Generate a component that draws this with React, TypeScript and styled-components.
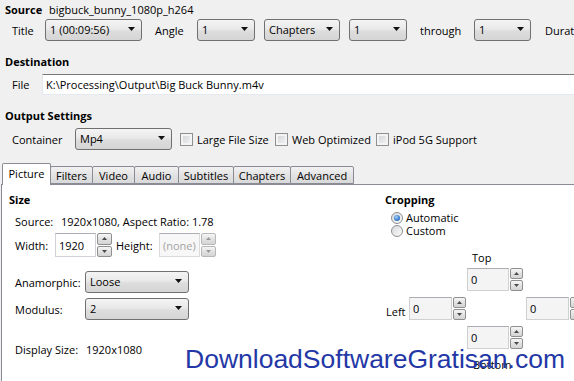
import React from "react";
import styled, { createGlobalStyle } from "styled-components";

const Global = createGlobalStyle`
  html, body { margin: 0; padding: 0; background: #f0f0f0; }
  body {
    font-family: "Open Sans", "Noto Sans", sans-serif;
    font-size: 11px;
    color: #000;
    overflow: hidden;
  }
  #root { width: 574px; height: 381px; }
`;

const Window = styled.div`
  position: relative;
  width: 574px;
  height: 381px;
  overflow: hidden;
  background: #f0f0f0;
  display: flex;
  flex-direction: column;
  white-space: nowrap;
  & > * { flex-shrink: 0; }
`;

const SourceRow = styled.div`
  display: flex;
  align-items: center;
  height: 19px;
  padding-left: 5px;
`;

const Bold = styled.span<{ $w?: number }>`
  font-weight: 700;
  ${(p) => (p.$w ? `width: ${p.$w}px; flex-shrink: 0;` : "")}
`;

const Header = styled.div<{ $mt?: number; $pl?: number }>`
  font-weight: 700;
  line-height: 16px;
  height: 16px;
  flex-shrink: 0;
  margin-top: ${(p) => p.$mt ?? 0}px;
  padding-left: ${(p) => p.$pl ?? 0}px;
`;

const FieldRow = styled.div<{ $mt?: number; $h?: number; $pl?: number }>`
  display: flex;
  align-items: center;
  height: ${(p) => p.$h ?? 22}px;
  margin-top: ${(p) => p.$mt ?? 0}px;
  padding-left: ${(p) => p.$pl ?? 12}px;
  flex-shrink: 0;
`;

const Label = styled.span<{ $w?: number; $ml?: number; $color?: string }>`
  flex-shrink: 0;
  ${(p) => (p.$w ? `width: ${p.$w}px;` : "")}
  margin-left: ${(p) => p.$ml ?? 0}px;
  color: ${(p) => p.$color ?? "#000"};
`;

const ComboBox = styled.div<{ $w: number; $ml?: number }>`
  box-sizing: border-box;
  width: ${(p) => p.$w}px;
  margin-left: ${(p) => p.$ml ?? 0}px;
  height: 22px;
  flex-shrink: 0;
  display: flex;
  align-items: center;
  padding: 0 6px 2px 4px;
  border: 1px solid #707070;
  border-radius: 3px;
  background: linear-gradient(#f4f4f4, #e9e9e9 45%, #dddddd 55%, #d5d5d5);
`;

const ComboText = styled.span`
  flex: 1;
  overflow: hidden;
`;

const TextBox = styled.div`
  box-sizing: border-box;
  flex: 1;
  height: 21px;
  margin-right: -10px;
  display: flex;
  align-items: center;
  padding-left: 3px;
  background: #fff;
  border: 1px solid #e3e9ef;
  border-top-color: #7a7a7a;
`;

const CheckItem = styled.div<{ $w?: number; $ml?: number }>`
  display: flex;
  align-items: center;
  gap: 4px;
  flex-shrink: 0;
  ${(p) => (p.$w ? `width: ${p.$w}px;` : "")}
  margin-left: ${(p) => p.$ml ?? 0}px;
`;

const CheckBox = styled.span`
  box-sizing: border-box;
  width: 13px;
  height: 13px;
  border: 1px solid #8e8f8f;
  background: linear-gradient(135deg, #cfd1d4 0%, #f6f6f6 100%);
  box-shadow: inset 0 0 0 2px #f4f4f4;
  flex-shrink: 0;
`;

const TabStrip = styled.div`
  display: flex;
  align-items: flex-end;
  height: 21px;
  margin-top: 13px;
  padding-left: 2px;
  position: relative;
  z-index: 1;
  flex-shrink: 0;
`;

const Tab = styled.div<{ $w: number; $active?: boolean }>`
  box-sizing: border-box;
  width: ${(p) => p.$w}px;
  height: ${(p) => (p.$active ? 22 : 18)}px;
  margin-left: ${(p) => (p.$active ? 0 : -1)}px;
  margin-bottom: ${(p) => (p.$active ? -1 : 0)}px;
  border: 1px solid #898c95;
  border-bottom: ${(p) => (p.$active ? "none" : "1px solid #898c95")};
  border-radius: 2px 2px 0 0;
  background: ${(p) =>
    p.$active ? "#ffffff" : "linear-gradient(#f2f2f2, #e3e3e3 50%, #d9d9d9)"};
  display: flex;
  align-items: ${(p) => (p.$active ? "flex-start" : "center")};
  padding-top: ${(p) => (p.$active ? 2 : 0)}px;
  justify-content: center;
  flex-shrink: 0;
`;

const Panel = styled.div`
  box-sizing: border-box;
  height: 220px;
  flex-shrink: 0;
  margin-left: 1px;
  margin-right: -4px;
  border: 1px solid #898c95;
  background: #ffffff;
  display: grid;
  grid-template-columns: 376px 1fr;
  padding: 7px 0 0 7px;
`;

const Column = styled.div`
  display: flex;
  flex-direction: column;
`;

const InfoRow = styled.div<{ $mt?: number }>`
  display: flex;
  line-height: 16px;
  height: 16px;
  padding-left: 6px;
  margin-top: ${(p) => p.$mt ?? 0}px;
`;

const SpinWrap = styled.div<{ $h: number }>`
  display: flex;
  height: ${(p) => p.$h}px;
  flex-shrink: 0;
`;

const SpinInput = styled.div<{ $w: number; $bg: string; $fg: string; $bd: string }>`
  box-sizing: border-box;
  width: ${(p) => p.$w}px;
  height: 100%;
  border: 1px solid ${(p) => p.$bd};
  border-top-color: #abadb3;
  background: ${(p) => p.$bg};
  color: ${(p) => p.$fg};
  padding-left: 3px;
  display: flex;
  align-items: center;
`;

const SpinButtons = styled.div<{ $w: number }>`
  box-sizing: border-box;
  width: ${(p) => p.$w}px;
  display: flex;
  flex-direction: column;
  gap: 1px;
  padding-left: 1px;
`;

const SpinBtn = styled.div<{ $dim?: boolean }>`
  flex: 1;
  box-sizing: border-box;
  border: 1px solid ${(p) => (p.$dim ? "#b8b8b8" : "#8f8f8f")};
  border-radius: 2px;
  background: linear-gradient(#f6f6f6, #e2e2e2 50%, #d4d4d4);
  display: flex;
  align-items: center;
  justify-content: center;
`;

const RadioList = styled.div`
  display: flex;
  flex-direction: column;
  margin-top: 3px;
  padding-left: 6px;
`;

const RadioRow = styled.div`
  display: flex;
  align-items: center;
  gap: 3px;
  height: 13px;
  line-height: 13px;
`;

const RadioCircle = styled.span<{ $on?: boolean }>`
  box-sizing: border-box;
  width: 12px;
  height: 12px;
  border-radius: 50%;
  border: 1px solid #8e8f8f;
  background: linear-gradient(135deg, #d9dadc, #fbfbfb);
  display: flex;
  align-items: center;
  justify-content: center;
  flex-shrink: 0;
  &::after {
    content: "";
    display: ${(p) => (p.$on ? "block" : "none")};
    width: 6px;
    height: 6px;
    border-radius: 50%;
    background: radial-gradient(circle at 40% 35%, #a9d4f7 0%, #3a7fd0 55%, #1f4f9a 100%);
  }
`;

const CropGrid = styled.div`
  display: grid;
  grid-template-columns: 23px 58px 59px 60px;
  grid-template-rows: 18px 29px 29px 23px auto;
  margin-top: 13px;
  margin-left: 1px;
`;

const CropCell = styled.div<{ $c: number; $r: number; $pl?: number; $mt?: number; $center?: boolean }>`
  grid-column: ${(p) => p.$c};
  grid-row: ${(p) => p.$r};
  padding-left: ${(p) => p.$pl ?? 0}px;
  margin-top: ${(p) => p.$mt ?? 0}px;
  line-height: 15px;
  ${(p) => (p.$center ? "align-self: center;" : "align-self: start;")}
`;

const Watermark = styled.div`
  position: absolute;
  left: 185px;
  top: 344px;
  font-family: "Liberation Sans", Arial, sans-serif;
  font-size: 26.5px;
  line-height: 30px;
  color: #2338a6;
  pointer-events: none;
`;

const Arrow = () => (
  <svg width="7" height="4" viewBox="0 0 7 4">
    <path d="M0 0H7L3.5 4Z" fill="#111" />
  </svg>
);

const Combo = ({ w, ml, children }: { w: number; ml?: number; children: React.ReactNode }) => (
  <ComboBox $w={w} $ml={ml}>
    <ComboText>{children}</ComboText>
    <Arrow />
  </ComboBox>
);

const Tri = ({ up, dim }: { up?: boolean; dim?: boolean }) => (
  <svg width="5" height="3" viewBox="0 0 5 3">
    <path d={up ? "M0 3H5L2.5 0Z" : "M0 0H5L2.5 3Z"} fill={dim ? "#9a9a9a" : "#4a4a4a"} />
  </svg>
);

const Spin = ({
  value,
  w,
  bw,
  h,
  bg = "#fff",
  fg = "#000",
  bd = "#d7d7d7",
  dim,
}: {
  value: string;
  w: number;
  bw: number;
  h: number;
  bg?: string;
  fg?: string;
  bd?: string;
  dim?: boolean;
}) => (
  <SpinWrap $h={h}>
    <SpinInput $w={w} $bg={bg} $fg={fg} $bd={bd}>
      {value}
    </SpinInput>
    <SpinButtons $w={bw}>
      <SpinBtn $dim={dim}>
        <Tri up dim={dim} />
      </SpinBtn>
      <SpinBtn $dim={dim}>
        <Tri dim={dim} />
      </SpinBtn>
    </SpinButtons>
  </SpinWrap>
);

const tabs: [string, number][] = [
  ["Picture", 49],
  ["Filters", 43],
  ["Video", 43],
  ["Audio", 45],
  ["Subtitles", 56],
  ["Chapters", 58],
  ["Advanced", 64],
];

export default function App() {
  return (
    <>
      <Global />
      <Window>
        <SourceRow>
          <Bold $w={44}>Source</Bold>
          <span>bigbuck_bunny_1080p_h264</span>
        </SourceRow>

        <FieldRow>
          <Label $w={33}>Title</Label>
          <Combo w={97}>1 (00:09:56)</Combo>
          <Label $ml={13} $w={42}>Angle</Label>
          <Combo w={58}>1</Combo>
          <Combo w={76} ml={9}>Chapters</Combo>
          <Combo w={58} ml={9}>1</Combo>
          <Label $ml={13} $w={54}>through</Label>
          <Combo w={57}>1</Combo>
          <Label $ml={14}>Duration: 00:09:56</Label>
        </FieldRow>

        <Header $mt={13} $pl={5}>Destination</Header>
        <FieldRow $mt={4} $h={21}>
          <Label $w={30}>File</Label>
          <TextBox>K:\Processing\Output\Big Buck Bunny.m4v</TextBox>
        </FieldRow>

        <Header $mt={13} $pl={5}>Output Settings</Header>
        <FieldRow $mt={4}>
          <Label $w={63}>Container</Label>
          <Combo w={97}>Mp4</Combo>
          <CheckItem $ml={8} $w={95}>
            <CheckBox />
            <span>Large File Size</span>
          </CheckItem>
          <CheckItem $w={101}>
            <CheckBox />
            <span>Web Optimized</span>
          </CheckItem>
          <CheckItem>
            <CheckBox />
            <span>iPod 5G Support</span>
          </CheckItem>
        </FieldRow>

        <TabStrip>
          {tabs.map(([name, w], i) => (
            <Tab key={name} $w={w} $active={i === 0}>
              {name}
            </Tab>
          ))}
        </TabStrip>

        <Panel>
          <Column>
            <Header>Size</Header>
            <InfoRow $mt={6}>
              <Label $w={46}>Source:</Label>
              <span>1920x1080, Aspect Ratio: 1.78</span>
            </InfoRow>
            <FieldRow $mt={3} $h={24} $pl={6}>
              <Label $w={40}>Width:</Label>
              <Spin value="1920" w={41} bw={16} h={24} bd="#cfd3d8" />
              <Label $ml={4} $w={43}>Height:</Label>
              <Spin value="(none)" w={41} bw={16} h={24} bg="#f7f7f7" fg="#a3a3a3" bd="#dadada" dim />
            </FieldRow>
            <FieldRow $mt={14} $pl={6}>
              <Label $w={70}>Anamorphic:</Label>
              <Combo w={104}>Loose</Combo>
            </FieldRow>
            <FieldRow $mt={5} $pl={6}>
              <Label $w={70}>Modulus:</Label>
              <Combo w={104}>2</Combo>
            </FieldRow>
            <InfoRow $mt={22}>
              <Label $w={71}>Display Size:</Label>
              <span>1920x1080</span>
            </InfoRow>
          </Column>

          <Column>
            <Header>Cropping</Header>
            <RadioList>
              <RadioRow>
                <RadioCircle $on />
                <span>Automatic</span>
              </RadioRow>
              <RadioRow>
                <RadioCircle />
                <span>Custom</span>
              </RadioRow>
            </RadioList>
            <CropGrid>
              <CropCell $c={3} $r={1} $pl={5}>Top</CropCell>
              <CropCell $c={3} $r={2}>
                <Spin value="0" w={42} bw={14} h={23} bg="#f4f4f4" bd="#d0d0d0" />
              </CropCell>
              <CropCell $c={1} $r={3} $center>
                Left
              </CropCell>
              <CropCell $c={2} $r={3}>
                <Spin value="0" w={43} bw={14} h={23} bg="#f4f4f4" bd="#d0d0d0" />
              </CropCell>
              <CropCell $c={4} $r={3}>
                <Spin value="0" w={43} bw={14} h={23} bg="#f4f4f4" bd="#d0d0d0" />
              </CropCell>
              <CropCell $c={3} $r={4}>
                <Spin value="0" w={42} bw={14} h={23} bg="#f4f4f4" bd="#d0d0d0" />
              </CropCell>
              <CropCell $c={3} $r={5} $pl={6} $mt={8}>
                Bottom
              </CropCell>
            </CropGrid>
          </Column>
        </Panel>

        <Watermark>DownloadSoftwareGratisan.com</Watermark>
      </Window>
    </>
  );
}
